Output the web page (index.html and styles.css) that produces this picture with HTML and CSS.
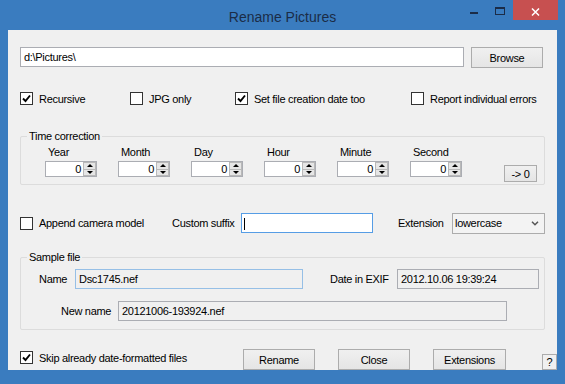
FILE: index.html
```html
<!DOCTYPE html>
<html>
<head>
<meta charset="utf-8">
<link rel="stylesheet" href="styles.css">
</head>
<body>
<div class="titlebar">
  <div class="title">Rename Pictures</div>
  <div class="controls">
    <div class="ctl"><span class="min-icon"></span></div>
    <div class="ctl"><span class="max-icon"></span></div>
    <div class="ctl close"><svg class="x-icon" width="9" height="8" viewBox="0 0 9 8"><path d="M1 0.5 L8 7.5 M8 0.5 L1 7.5" stroke="#fff" stroke-width="1.5" fill="none"/></svg></div>
  </div>
</div>
<div class="client">
  <div class="row-path">
    <div class="tb path">d:\Pictures\</div>
    <div class="btn browse">Browse</div>
  </div>

  <div class="row-checks">
    <div class="chk-item c-rec"><span class="box"><svg width="11" height="11" viewBox="0 0 11 11"><path d="M2 5.5 L4.5 8 L9 2.5" fill="none" stroke="#000" stroke-width="1.9"/></svg></span>Recursive</div>
    <div class="chk-item c-jpg"><span class="box"></span>JPG only</div>
    <div class="chk-item c-date"><span class="box"><svg width="11" height="11" viewBox="0 0 11 11"><path d="M2 5.5 L4.5 8 L9 2.5" fill="none" stroke="#000" stroke-width="1.9"/></svg></span>Set file creation date too</div>
    <div class="chk-item"><span class="box"></span>Report individual errors</div>
  </div>

  <div class="group time">
    <span class="legend">Time correction</span>
    <div class="spin-col"><div class="spin-label">Year</div><div class="spin"><span class="val">0</span><span class="arrows"><span class="up"></span><span class="dn"></span></span></div></div>
    <div class="spin-col"><div class="spin-label">Month</div><div class="spin"><span class="val">0</span><span class="arrows"><span class="up"></span><span class="dn"></span></span></div></div>
    <div class="spin-col"><div class="spin-label">Day</div><div class="spin"><span class="val">0</span><span class="arrows"><span class="up"></span><span class="dn"></span></span></div></div>
    <div class="spin-col"><div class="spin-label">Hour</div><div class="spin"><span class="val">0</span><span class="arrows"><span class="up"></span><span class="dn"></span></span></div></div>
    <div class="spin-col"><div class="spin-label">Minute</div><div class="spin"><span class="val">0</span><span class="arrows"><span class="up"></span><span class="dn"></span></span></div></div>
    <div class="spin-col last"><div class="spin-label">Second</div><div class="spin"><span class="val">0</span><span class="arrows"><span class="up"></span><span class="dn"></span></span></div></div>
    <div class="btn zero">-&gt; 0</div>
  </div>

  <div class="row-append">
    <div class="chk-item c-app"><span class="box"></span>Append camera model</div>
    <div class="lbl-suffix">Custom suffix</div>
    <div class="tb suffix"><span class="caret"></span></div>
    <div class="lbl-ext">Extension</div>
    <div class="select"><span>lowercase</span><svg width="8" height="5" viewBox="0 0 8 5"><path d="M1 0.8 L4 3.8 L7 0.8" fill="none" stroke="#555" stroke-width="1.5"/></svg></div>
  </div>

  <div class="group sample">
    <span class="legend">Sample file</span>
    <div class="srow">
      <div class="lbl-name">Name</div>
      <div class="tb ro name">Dsc1745.nef</div>
      <div class="lbl-date">Date in EXIF</div>
      <div class="tb ro date">2012.10.06 19:39:24</div>
    </div>
    <div class="srow second">
      <div class="lbl-newname">New name</div>
      <div class="tb ro newname">20121006-193924.nef</div>
    </div>
  </div>

  <div class="row-bottom">
    <div class="chk-item c-skip"><span class="box"><svg width="11" height="11" viewBox="0 0 11 11"><path d="M2 5.5 L4.5 8 L9 2.5" fill="none" stroke="#000" stroke-width="1.9"/></svg></span>Skip already date-formatted files</div>
    <div class="btn b-rename">Rename</div>
    <div class="btn b-close">Close</div>
    <div class="btn b-ext">Extensions</div>
    <div class="help">?</div>
  </div>
</div>
</body>
</html>
```
FILE: styles.css
```css
* { box-sizing: border-box; }
html, body { margin: 0; padding: 0; }
body {
  width: 565px;
  height: 384px;
  overflow: hidden;
  background: #3a7cbf;
  font-family: "Liberation Sans", Arial, sans-serif;
  font-size: 11px;
  letter-spacing: -0.3px;
  color: #000;
}

/* title bar */
.titlebar {
  height: 30px;
  display: grid;
  grid-template-columns: 1fr auto 1fr;
  grid-template-rows: 30px;
}
.title {
  grid-column: 2;
  font-size: 14px;
  letter-spacing: 0;
  color: #1b2c47;
  line-height: 34px;
  height: 30px;
}
.controls {
  grid-column: 3;
  justify-self: end;
  display: flex;
  padding-right: 7px;
  height: 20px;
}
.ctl {
  width: 26px;
  height: 20px;
  display: flex;
  align-items: center;
  justify-content: center;
}
.min-icon { width: 8px; height: 2px; background: #1b2c47; margin-top: 6px; }
.max-icon { width: 10px; height: 8px; border: 1px solid #1b2c47; border-top-width: 2px; margin-top: 2px; }
.close { width: 45px; background: #c75050; }
.x-icon { margin-top: 3px; }

/* client */
.client {
  margin-left: 8px;
  width: 549px;
  height: 340px;
  background: #f0f0f0;
  padding: 17px 0 0 12px;
}

.tb {
  height: 20px;
  border: 1px solid #abadb3;
  background: #fff;
  padding: 0 3px;
  line-height: 18px;
  white-space: nowrap;
  overflow: hidden;
}
.btn {
  height: 21px;
  border: 1px solid #acacac;
  background: linear-gradient(#f0f0f0, #e5e5e5);
  display: flex;
  align-items: center;
  justify-content: center;
  white-space: nowrap;
}

.row-path { display: flex; gap: 7px; }
.path { width: 444px; }
.browse { width: 72px; }

.chk-item { display: flex; align-items: center; gap: 6px; white-space: nowrap; }
.box {
  width: 13px;
  height: 13px;
  border: 1px solid #333;
  background: #fff;
  flex: none;
  display: flex;
}

.row-checks { display: flex; align-items: center; height: 13px; margin-top: 24px; }
.c-rec { width: 110px; }
.c-jpg { width: 105px; }
.c-date { width: 176px; }

/* group boxes */
.group {
  position: relative;
  width: 525px;
  border: 1px solid #dcdcdc;
  border-radius: 2px;
}
.legend {
  position: absolute;
  top: -7px;
  left: 6px;
  padding: 0 2px;
  background: #f0f0f0;
  line-height: 13px;
  white-space: nowrap;
}

.time {
  margin-top: 31px;
  height: 49px;
  padding: 9px 0 0 24px;
  display: flex;
}
.spin-col { width: 52px; margin-right: 21px; display: flex; flex-direction: column; }
.spin-col.last { margin-right: 0; }
.spin-label { height: 13px; line-height: 13px; padding-left: 3px; }
.spin {
  margin-top: 2px;
  height: 16px;
  border: 1px solid #abadb3;
  background: #fff;
  display: flex;
}
.val { flex: 1; text-align: right; padding-right: 2px; line-height: 14px; }
.arrows { width: 13px; display: flex; flex-direction: column; }
.arrows span {
  flex: 1;
  background: #e6e6e6;
  border: 1px solid #b9b9b9;
  display: flex;
  align-items: center;
  justify-content: center;
}
.arrows .dn { margin-top: -1px; }
.up::after {
  content: "";
  border-left: 3px solid transparent;
  border-right: 3px solid transparent;
  border-bottom: 3px solid #000;
}
.dn::after {
  content: "";
  border-left: 3px solid transparent;
  border-right: 3px solid transparent;
  border-top: 3px solid #000;
}
.zero {
  width: 33px;
  height: 17px;
  margin-left: 42px;
  margin-top: 19px;
}

/* append row */
.row-append { display: flex; align-items: center; height: 20px; margin-top: 28px; }
.c-app { width: 152px; }
.lbl-suffix { width: 69px; white-space: nowrap; }
.suffix { width: 132px; border-color: #569de5; padding: 3px 2px; display: flex; }
.caret { width: 1px; height: 12px; background: #000; margin-top: 1px; }
.lbl-ext { margin-left: 25px; width: 54px; }
.select {
  width: 93px;
  height: 21px;
  border: 1px solid #acacac;
  background: #f3f3f3;
  display: flex;
  align-items: center;
  justify-content: space-between;
  padding: 0 5px 0 2px;
}

/* sample group */
.sample {
  margin-top: 24px;
  height: 73px;
  padding: 11px 0 0 18px;
}
.srow { display: flex; align-items: center; height: 20px; }
.srow.second { margin-top: 12px; }
.ro { background: #f0f0f0; }
.lbl-name { width: 36px; }
.name { width: 228px; border-color: #96bfe6; }
.lbl-date { margin-left: 27px; width: 67px; white-space: nowrap; }
.date { width: 142px; }
.lbl-newname { margin-left: 22px; width: 57px; white-space: nowrap; }
.newname { width: 389px; }

/* bottom row */
.row-bottom { display: flex; height: 21px; margin-top: 19px; }
.c-skip { width: 223px; height: 13px; margin-top: 2px; }
.b-rename, .b-close { width: 72px; }
.b-close, .b-ext { margin-left: 23px; }
.b-ext { width: 73px; }
.help {
  margin-left: auto;
  align-self: flex-end;
  width: 15px;
  height: 16px;
  border: 1px solid #acacac;
  background: #f0f0f0;
  text-align: center;
  line-height: 14px;
  letter-spacing: 0;
}
```
